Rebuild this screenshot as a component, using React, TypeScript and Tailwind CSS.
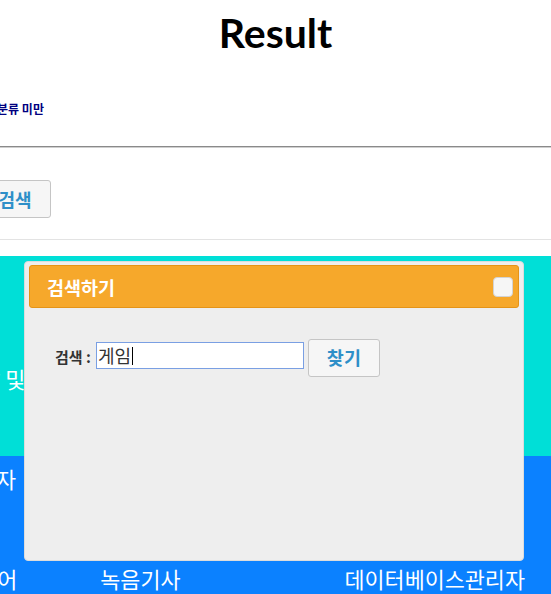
import { useState } from "react";

const ko = "font-['Noto_Sans_CJK_KR',sans-serif]";

const SearchDialog = () => {
  const [keyword] = useState("게임");

  return (
    <div
      className="
        absolute
        left-[24px]
        top-[261px]
        flex
        h-[300px]
        w-[500px]
        flex-col
        rounded-[4px]
        border
        border-[#dcdcdc]
        bg-[#eeeeee]
        px-[4px]
        pt-[3px]
      "
    >

      <div className="flex h-[43px] items-center justify-between rounded-[3px] border border-[#e59417] bg-[#f6a82b] pl-[17px] pr-[5px]">

        <span className="text-[18.5px] font-bold leading-[24px] text-white">
          검색하기
        </span>

        <button className="h-[20px] w-[20px] rounded-[4px] border border-[#d3d3d3] bg-[#f6f6f6]" />

      </div>

      <div className="mt-[31px] flex items-start pl-[26px]">

        <label className="mt-[8px] text-[15px] font-bold leading-[20px] text-[#333333]">
          검색 :
        </label>

        <div className="ml-[5px] mt-[3px] flex h-[27px] w-[208px] items-center border border-[#7a9fe3] bg-white pl-[1px] text-[18px] leading-[25px] text-[#333333]">
          {keyword}
          <span className="ml-[1px] h-[18px] w-px bg-black" />
        </div>

        <button className="ml-[4px] h-[38px] w-[72px] rounded-[3px] border border-[#c5c5c5] bg-[#f6f6f6] text-[18.5px] font-bold text-[#2e8fc8]">
          찾기
        </button>

      </div>

    </div>
  );
};

export default function App() {
  return (
    <div className={`relative flex h-[594px] w-[551px] flex-col overflow-hidden bg-white ${ko}`}>

      <h1 className="mt-[8px] text-center font-['Lato',sans-serif] text-[41px] font-bold leading-[50px] text-black">
        Result
      </h1>

      <p className="ml-[-14px] mt-[43px] whitespace-nowrap text-[12px] font-bold leading-[16px] text-[#000080]">
        대분류 미만
      </p>

      <hr className="mt-[29px] border-0 border-t border-b border-t-[#8a8a8a] border-b-[#cfcfcf]" />

      <div className="mt-[32px] flex">
        <button className="ml-[-21px] h-[38px] w-[72px] rounded-[3px] border border-[#c5c5c5] bg-[#f6f6f6] text-[18px] font-bold text-[#2e8fc8]">
          검색
        </button>
      </div>

      <div className="mt-[21px] border-t border-[#e3e3e3]" />

      <section className="mt-[16px] h-[200px] bg-[#00dfd7] text-[21.8px] leading-[28px] text-white">
        <div className="mt-[109px] flex whitespace-nowrap">
          <span className="ml-[-80px]">연구개발</span>
          <span className="ml-[5px]">및</span>
        </div>
      </section>

      <section className="flex-1 bg-[#0b81ff] text-[21.8px] leading-[28px] text-white">

        <div className="mt-[9px] flex whitespace-nowrap">
          <span className="ml-[-44px]">개발자</span>
        </div>

        <div className="mt-[72px] flex whitespace-nowrap">
          <span className="ml-[-83px]">소프트웨어</span>
          <span className="ml-[83px]">녹음기사</span>
          <span className="ml-[164px]">데이터베이스관리자</span>
        </div>

      </section>

      <SearchDialog />

    </div>
  );
}
